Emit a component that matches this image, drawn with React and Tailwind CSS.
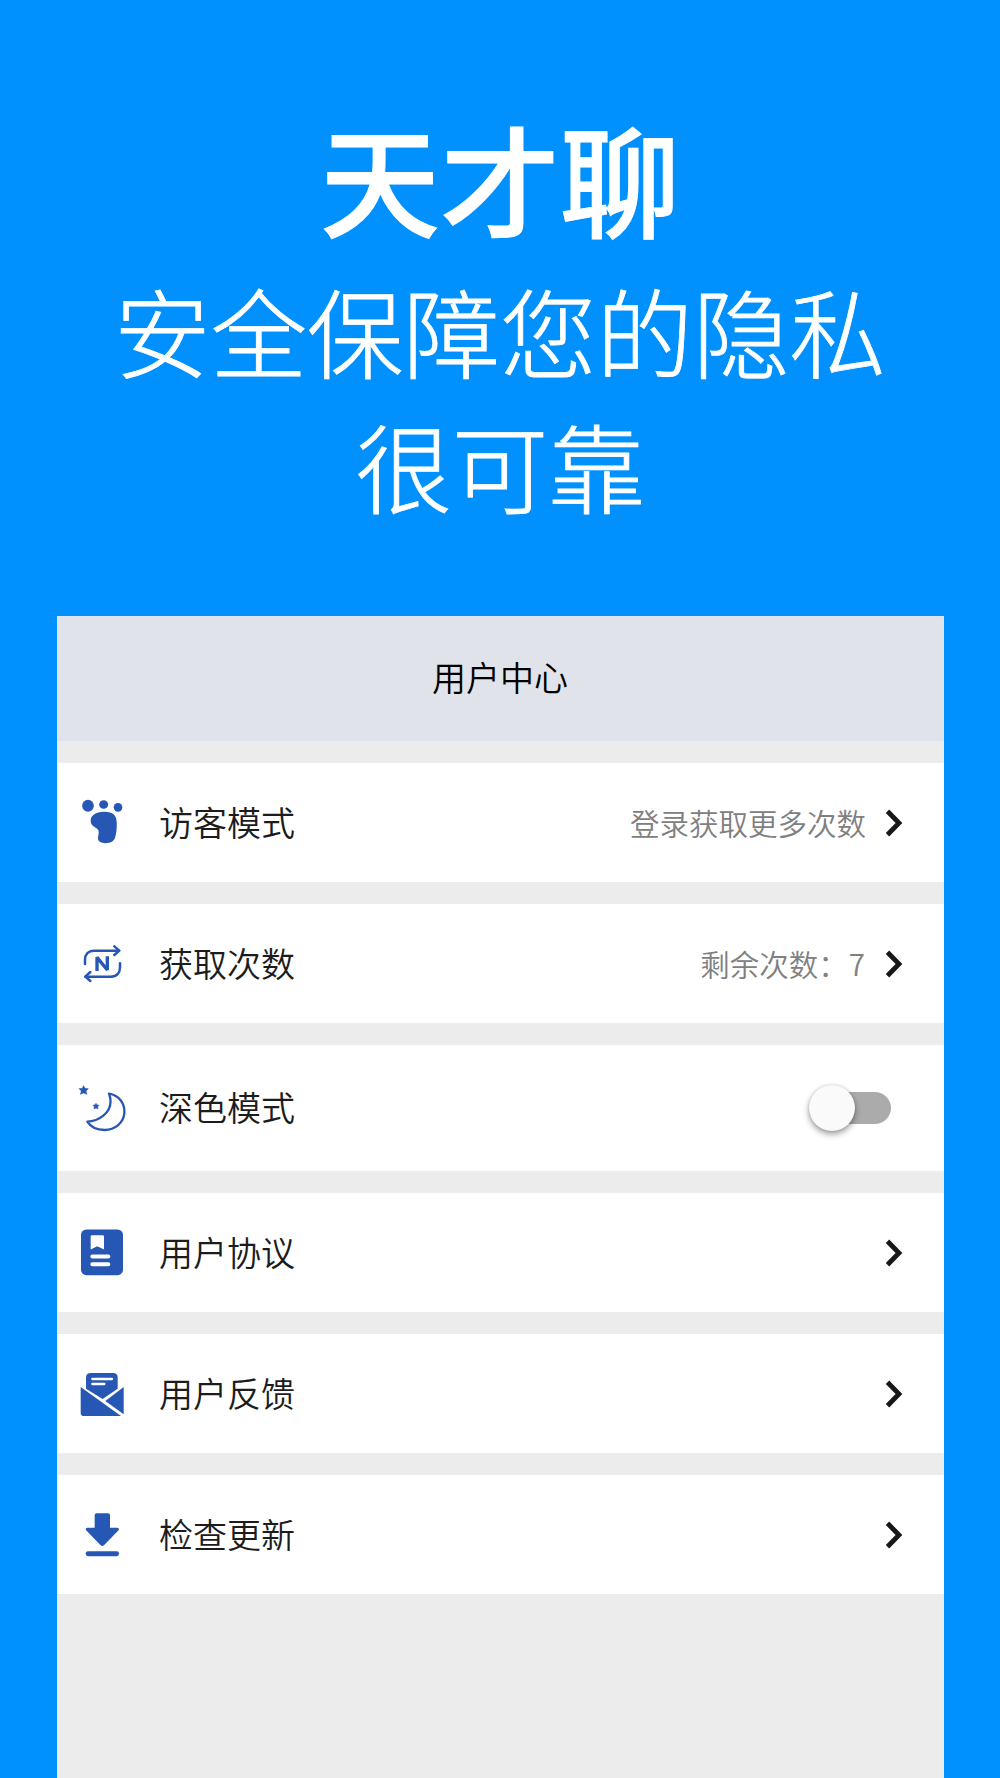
import React, { useState } from "react";

const BLUE = "#2757b5";

function FootIcon() {
  return (
    <svg className="w-12 h-12 shrink-0" viewBox="54 55.5 144 144" fill={BLUE}>
      <ellipse cx="84" cy="76" rx="17.5" ry="18" />
      <ellipse cx="131" cy="72" rx="13.5" ry="13" />
      <circle cx="174" cy="80.500" r="13" />
      <path d="M92 120C93 104 108 95 130 94C158 93 169 103 170 124C171 146 169 160 165 172C161 184 150 188 137 188C122 188 113 182 114 172C115 162 118 156 115 149C111 141 91 138 92 120Z" />
    </svg>
  );
}

function TimesIcon() {
  return (
    <svg
      className="w-12 h-12 shrink-0"
      viewBox="54 60 144 144"
      fill="none"
      stroke={BLUE}
      strokeWidth="7.500"
      strokeLinecap="round"
      strokeLinejoin="round"
    >
      <path d="M75 132V120C75 103 85 92 102 92H177" />
      <path d="M163 79L178 92L163 105" />
      <path d="M180 130V142C180 159 170 170 153 170H76" />
      <path d="M91 156L76 170L91 183" />
      <path d="M111 153V112L142 150V109" strokeWidth="10" strokeLinecap="butt" strokeLinejoin="bevel" />
    </svg>
  );
}

function MoonIcon() {
  return (
    <svg className="w-12 h-12 shrink-0" viewBox="54 71 144 144" fill={BLUE}>
      <path d="M71 76L75 84L85 85L78 92L81 102L71 98L61 102L64 92L57 85L67 84Z" stroke={BLUE} strokeWidth="1.500" />
      <path d="M108 129L111 134L117 135L113 139.500L114 145L108 143L102 145L103 139.500L99 135L105 134Z" stroke={BLUE} strokeWidth="2" />
      <path
        d="M147 100C178 105 195 130 193 158C191 187 165 209 134 209C112 209 92 200 82 184C112 183 157 160 151 115C150 108 148 104 147 100Z"
        fill="none"
        stroke={BLUE}
        strokeWidth="7"
        strokeLinejoin="round"
      />
    </svg>
  );
}

function AgreementIcon() {
  return (
    <svg className="w-12 h-12 shrink-0" viewBox="54 56.5 144 144">
      <rect x="63" y="58" width="126" height="137" rx="16" fill={BLUE} />
      <path d="M92 79Q92 75 96 75H128Q132 75 132 79V118L112 108L92 118Z" fill="#fff" />
      <path d="M97 139H145M97 162H145" stroke="#fff" strokeWidth="12" strokeLinecap="round" />
    </svg>
  );
}

function FeedbackIcon() {
  return (
    <svg className="w-12 h-12 shrink-0" viewBox="54 60 144 144">
      <path d="M78 116V83Q78 69 92 69H160Q173 69 173 83V116L128 147Z" fill={BLUE} />
      <path d="M97 87H156M97 102H133" stroke="#fff" strokeWidth="7" strokeLinecap="round" />
      <path d="M62 111L183 198H72Q62 198 62 188Z" fill={BLUE} />
      <path d="M191 111V193L136 153Z" fill={BLUE} />
    </svg>
  );
}

function UpdateIcon() {
  return (
    <svg className="w-12 h-12 shrink-0" viewBox="54 62.5 144 144" fill={BLUE}>
      <path d="M110 69H144Q150 69 150 75V113H172Q180 115 175 121L132 165Q127 170 122 165L79 121Q74 115 82 113H104V75Q104 69 110 69Z" />
      <rect x="77" y="183" width="100" height="15" rx="7" />
    </svg>
  );
}

function Chevron() {
  return (
    <svg
      className="w-[18px] h-[28px] shrink-0"
      viewBox="0 0 18 28"
      fill="none"
      stroke="#181818"
      strokeWidth="4.800"
    >
      <path d="M2.500 2.200L14 14L2.500 25.800" />
    </svg>
  );
}

function Toggle({ checked, onChange }) {
  return (
    <button
      role="switch"
      aria-checked={checked}
      onClick={() => onChange(!checked)}
      className="flex w-[82px] h-[46px] mr-3 items-center shrink-0"
    >
      <span
        className={`flex w-full h-8 items-center rounded-full ${
          checked
            ? "justify-end bg-[linear-gradient(270deg,transparent_20px,#93abda_20px)]"
            : "bg-[linear-gradient(90deg,transparent_20px,#ababab_20px)]"
        }`}
      >
        <span className="w-[46px] h-[46px] rounded-full bg-[#fafafa] shadow-[0_3px_6px_rgba(0,0,0,0.4),0_0_3px_rgba(0,0,0,0.12)]" />
      </span>
    </button>
  );
}

function Row({ icon: Icon, label, value, children, tall = false }) {
  return (
    <div
      className={`flex items-center bg-white pl-[21.500px] pr-[41px] ${
        tall ? "h-[125.500px]" : "h-[118.500px] pt-px"
      }`}
    >
      <Icon />
      <span className="ml-[33px] pb-0.5 text-[34px] leading-none text-[#1c1c1c] font-[350]">
        {label}
      </span>
      <div className="ml-auto flex items-center">
        {value && (
          <span className="mr-[18.500px] text-[29.500px] leading-none text-[#808080] font-[350]">
            {value}
          </span>
        )}
        {children || <Chevron />}
      </div>
    </div>
  );
}

export default function App() {
  const [dark, setDark] = useState(false);

  return (
    <div className="flex flex-col items-center w-[1000px] h-[1778px] overflow-hidden bg-[#0091ff] font-['Noto_Sans_CJK_SC',sans-serif]">
      {/* Slogan */}
      <header className="h-[616px] shrink-0 pt-[92px] text-center text-white whitespace-nowrap">
        <h1 className="text-[120px] leading-[170px] font-medium [-webkit-text-stroke:1px_white]">
          天才聊
        </h1>
        <p className="text-[96.500px] leading-[135px] font-light [-webkit-text-stroke:0.8px_white]">
          安全保障您的隐私
          <br />
          很可靠
        </p>
      </header>

      {/* User center */}
      <main className="flex flex-col w-[887px] grow bg-[#ececec]">
        <div className="flex h-[124.500px] items-center justify-center bg-[#e0e3ea] pb-[3px] text-[34px] leading-none text-black font-[350]">
          用户中心
        </div>
        <div className="flex flex-col gap-[22.500px] pt-[22.500px]">
          <Row icon={FootIcon} label="访客模式" value="登录获取更多次数" />
          <Row
            icon={TimesIcon}
            label="获取次数"
            value={
              <>
                剩余次数：<span className="ml-px mr-px">7</span>
              </>
            }
          />
          <Row icon={MoonIcon} label="深色模式" tall>
            <Toggle checked={dark} onChange={setDark} />
          </Row>
          <Row icon={AgreementIcon} label="用户协议" />
          <Row icon={FeedbackIcon} label="用户反馈" />
          <Row icon={UpdateIcon} label="检查更新" />
        </div>
      </main>
    </div>
  );
}
